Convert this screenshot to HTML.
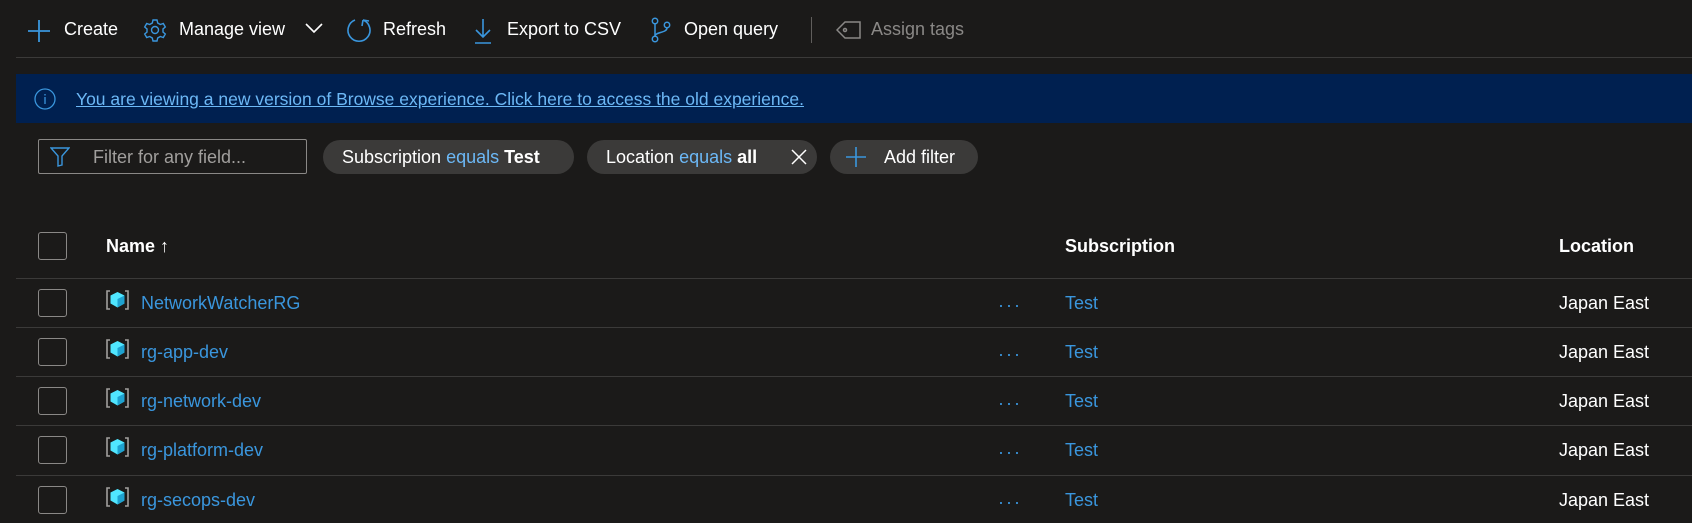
<!DOCTYPE html><html><head><meta charset="utf-8"><style>
body{margin:0;width:1692px;height:523px;background:#1b1a19;font-family:"Liberation Sans",sans-serif;color:#fff;position:relative;overflow:hidden;font-size:18px}
.a{position:absolute;white-space:nowrap}
.t{top:19px}
.line{position:absolute;left:16px;right:0;height:1px;background:#3b3a39}
.cb{position:absolute;left:38px;width:29px;height:28px;border:1.5px solid #8a8886;border-radius:3px;box-sizing:border-box}
.chip{position:absolute;top:140px;height:34px;border-radius:17px;background:#3b3a39;line-height:34px;font-size:18px}
.b{color:#6cb8f6}
.lnk{color:#3a96dd}
</style></head><body>
<svg class="a" style="left:27px;top:19px" width="24" height="24" viewBox="0 0 24 24"><path d="M12 1v22M1 12h22" stroke="#3a96dd" stroke-width="1.8"/></svg>
<div class="a t" style="left:64px">Create</div>
<svg class="a" style="left:143px;top:18px" width="24" height="24" viewBox="0 0 24 24" fill="none" stroke="#3a96dd" stroke-width="1.4"><circle cx="12" cy="12" r="3.5"/><path d="M10 2h4l.7 3 2.6 1.5 3-1 2 3.5-2.3 2v3l2.3 2-2 3.5-3-1-2.6 1.5-.7 3h-4l-.7-3-2.6-1.5-3 1-2-3.5 2.3-2v-3l-2.3-2 2-3.5 3 1L9.3 5z"/></svg>
<div class="a t" style="left:179px">Manage view</div>
<svg class="a" style="left:305px;top:22px" width="18" height="12" viewBox="0 0 18 12"><path d="M1 2l8 8 8-8" stroke="#fff" stroke-width="1.6" fill="none"/></svg>
<svg class="a" style="left:347px;top:17px" width="25" height="26" viewBox="0 0 25 26" fill="none" stroke="#3a96dd" stroke-width="1.6"><path d="M8 3A11 11 0 1 0 16 3"/><path d="M16 3l-1 6M16 3l6 1" /></svg>
<div class="a t" style="left:383px">Refresh</div>
<svg class="a" style="left:474px;top:18px" width="18" height="26" viewBox="0 0 18 26" fill="none" stroke="#3a96dd" stroke-width="1.6"><path d="M9 1v18M2 12l7 7 7-7M1 25h16"/></svg>
<div class="a t" style="left:507px">Export to CSV</div>
<svg class="a" style="left:650px;top:17px" width="22" height="26" viewBox="0 0 22 26" fill="none" stroke="#3a96dd" stroke-width="1.5"><circle cx="5" cy="4" r="2.7"/><circle cx="5" cy="22" r="2.7"/><circle cx="17" cy="8" r="2.7"/><path d="M5 7v12M17 11c0 5-12 4-12 8"/></svg>
<div class="a t" style="left:684px">Open query</div>
<div class="a" style="left:811px;top:17px;width:1px;height:26px;background:#605e5c"></div>
<svg class="a" style="left:836px;top:20px" width="26" height="20" viewBox="0 0 26 20" fill="none" stroke="#8a8886" stroke-width="1.5"><path d="M1 10l8-8h15v16H9z"/><circle cx="9" cy="10" r="1.5"/></svg>
<div class="a t" style="left:871px;color:#8a8886">Assign tags</div>
<div class="line" style="top:57px"></div>
<div class="a" style="left:16px;top:74px;width:1676px;height:49px;background:#002050"></div>
<svg class="a" style="left:34px;top:88px" width="22" height="22" viewBox="0 0 22 22" fill="none" stroke="#3a96dd" stroke-width="1.3"><circle cx="11" cy="11" r="10"/><path d="M11 9v7M11 6v1.5"/></svg>
<div class="a" style="left:76px;top:89px;color:#6cb8f6;text-decoration:underline;font-size:17.5px">You are viewing a new version of Browse experience. Click here to access the old experience.</div>
<div class="a" style="left:38px;top:139px;width:269px;height:35px;border:1px solid #8a8886;border-radius:2px;box-sizing:border-box"></div>
<svg class="a" style="left:50px;top:147px" width="20" height="20" viewBox="0 0 20 20" fill="none" stroke="#3a96dd" stroke-width="1.4"><path d="M1 1h18l-7 8v9l-4 1V9z"/></svg>
<div class="a" style="left:93px;top:147px;color:#a19f9d">Filter for any field...</div>
<div class="chip" style="left:323px;width:251px"><span style="margin-left:19px">Subscription <span class="b">equals</span> <b>Test</b></span></div>
<div class="chip" style="left:587px;width:230px"><span style="margin-left:19px">Location <span class="b">equals</span> <b>all</b></span></div>
<svg class="a" style="left:791px;top:149px" width="16" height="16" viewBox="0 0 16 16"><path d="M1 1l14 14M15 1L1 15" stroke="#fff" stroke-width="1.5"/></svg>
<div class="chip" style="left:830px;width:148px"></div>
<svg class="a" style="left:846px;top:147px" width="20" height="20" viewBox="0 0 20 20"><path d="M10 0v20M0 10h20" stroke="#3a96dd" stroke-width="1.6"/></svg>
<div class="a" style="left:884px;top:147px">Add filter</div>
<div class="cb" style="top:232px"></div>
<div class="a" style="left:106px;top:236px;font-weight:bold">Name ↑</div>
<div class="a" style="left:1065px;top:236px;font-weight:bold">Subscription</div>
<div class="a" style="left:1559px;top:236px;font-weight:bold">Location</div>
<div class="line" style="top:278px"></div>
<div class="cb" style="top:289px"></div><svg class="a" style="left:106px;top:289px" width="23" height="22" viewBox="0 0 23 22"><path d="M4 2H1v18h3M19 2h3v18h-3" stroke="#a19f9d" stroke-width="1.6" fill="none"/><path d="M11.5 3l7 3.5v8l-7 4-7-4v-8z" fill="#50e6ff"/><path d="M11.5 10l7-3.5v8l-7 4z" fill="#1ea2d0"/></svg><div class="a lnk" style="left:141px;top:293px">NetworkWatcherRG</div><div class="a lnk" style="left:998px;top:295px;letter-spacing:2px">···</div><div class="a lnk" style="left:1065px;top:293px">Test</div><div class="a" style="left:1559px;top:293px">Japan East</div>
<div class="line" style="top:327px"></div>
<div class="cb" style="top:338px"></div><svg class="a" style="left:106px;top:338px" width="23" height="22" viewBox="0 0 23 22"><path d="M4 2H1v18h3M19 2h3v18h-3" stroke="#a19f9d" stroke-width="1.6" fill="none"/><path d="M11.5 3l7 3.5v8l-7 4-7-4v-8z" fill="#50e6ff"/><path d="M11.5 10l7-3.5v8l-7 4z" fill="#1ea2d0"/></svg><div class="a lnk" style="left:141px;top:342px">rg-app-dev</div><div class="a lnk" style="left:998px;top:344px;letter-spacing:2px">···</div><div class="a lnk" style="left:1065px;top:342px">Test</div><div class="a" style="left:1559px;top:342px">Japan East</div>
<div class="line" style="top:376px"></div>
<div class="cb" style="top:387px"></div><svg class="a" style="left:106px;top:387px" width="23" height="22" viewBox="0 0 23 22"><path d="M4 2H1v18h3M19 2h3v18h-3" stroke="#a19f9d" stroke-width="1.6" fill="none"/><path d="M11.5 3l7 3.5v8l-7 4-7-4v-8z" fill="#50e6ff"/><path d="M11.5 10l7-3.5v8l-7 4z" fill="#1ea2d0"/></svg><div class="a lnk" style="left:141px;top:391px">rg-network-dev</div><div class="a lnk" style="left:998px;top:393px;letter-spacing:2px">···</div><div class="a lnk" style="left:1065px;top:391px">Test</div><div class="a" style="left:1559px;top:391px">Japan East</div>
<div class="line" style="top:425px"></div>
<div class="cb" style="top:436px"></div><svg class="a" style="left:106px;top:436px" width="23" height="22" viewBox="0 0 23 22"><path d="M4 2H1v18h3M19 2h3v18h-3" stroke="#a19f9d" stroke-width="1.6" fill="none"/><path d="M11.5 3l7 3.5v8l-7 4-7-4v-8z" fill="#50e6ff"/><path d="M11.5 10l7-3.5v8l-7 4z" fill="#1ea2d0"/></svg><div class="a lnk" style="left:141px;top:440px">rg-platform-dev</div><div class="a lnk" style="left:998px;top:442px;letter-spacing:2px">···</div><div class="a lnk" style="left:1065px;top:440px">Test</div><div class="a" style="left:1559px;top:440px">Japan East</div>
<div class="line" style="top:475px"></div>
<div class="cb" style="top:486px"></div><svg class="a" style="left:106px;top:486px" width="23" height="22" viewBox="0 0 23 22"><path d="M4 2H1v18h3M19 2h3v18h-3" stroke="#a19f9d" stroke-width="1.6" fill="none"/><path d="M11.5 3l7 3.5v8l-7 4-7-4v-8z" fill="#50e6ff"/><path d="M11.5 10l7-3.5v8l-7 4z" fill="#1ea2d0"/></svg><div class="a lnk" style="left:141px;top:490px">rg-secops-dev</div><div class="a lnk" style="left:998px;top:492px;letter-spacing:2px">···</div><div class="a lnk" style="left:1065px;top:490px">Test</div><div class="a" style="left:1559px;top:490px">Japan East</div>
</body></html>
